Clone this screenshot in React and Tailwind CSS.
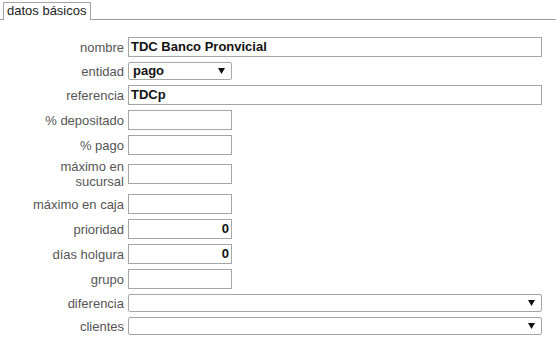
import React from "react";

const font = { fontFamily: '"Liberation Sans", Arial, sans-serif' };

function Arrow() {
  return (
    <svg width="7" height="6" viewBox="0 0 7 6" className="block">
      <polygon points="0,0 7,0 3.5,6" fill="#111" />
    </svg>
  );
}

function Label({ children }) {
  return (
    <div className="w-[124px] shrink-0 text-right text-[13px] leading-[15px] text-[#555]">
      {children}
    </div>
  );
}

function TextBox({ wide, value, right }) {
  return (
    <div
      className={`ml-[4px] h-[20px] border border-[#a6a6a6] bg-white flex items-center px-[2px] text-[13px] font-bold text-[#111] ${
        wide ? "w-[414px]" : "w-[104px]"
      } ${right ? "justify-end" : ""}`}
    >
      {value}
    </div>
  );
}

function Select({ wide, value }) {
  return (
    <div
      className={`ml-[4px] h-[18px] border border-[#a6a6a6] rounded-[2px] bg-white flex items-center justify-between pl-[4px] pr-[6px] text-[13px] font-bold text-[#111] ${
        wide ? "w-[414px]" : "w-[104px]"
      }`}
    >
      <span>{value}</span>
      <Arrow />
    </div>
  );
}

function Row({ label, children, h = 20, className = "" }) {
  return (
    <div className={`flex items-center ${className}`} style={{ height: h }}>
      <Label>{label}</Label>
      {children}
    </div>
  );
}

export default function App() {
  return (
    <div className="w-[556px] h-[348px] bg-white overflow-hidden" style={font}>
      <div className="flex pt-[2px]">
        <div className="w-[3px] h-[18px] border-b border-[#9a9a9a]" />
        <div className="h-[18px] border-l border-t border-r border-[#a6a6a6] px-[3px] text-[13px] leading-[16px] text-[#222] bg-white">
          datos básicos
        </div>
        <div className="flex-1 h-[18px] border-b border-[#9a9a9a]" />
      </div>
      <div className="flex flex-col gap-[5px] pt-[17px]">
        <Row label="nombre">
          <TextBox wide value="TDC Banco Pronvicial" />
        </Row>
        <Row label="entidad" h={18}>
          <Select value="pago" />
        </Row>
        <Row label="referencia">
          <TextBox wide value="TDCp" />
        </Row>
        <Row label="% depositado">
          <TextBox />
        </Row>
        <Row label="% pago">
          <TextBox />
        </Row>
        <Row
          label={
            <>
              máximo en
              <br />
              sucursal
            </>
          }
          className="mt-[4px]"
        >
          <TextBox />
        </Row>
        <Row label="máximo en caja" className="mt-[5px]">
          <TextBox />
        </Row>
        <Row label="prioridad">
          <TextBox value="0" right />
        </Row>
        <Row label="días holgura">
          <TextBox value="0" right />
        </Row>
        <Row label="grupo">
          <TextBox />
        </Row>
        <Row label="diferencia" h={18}>
          <Select wide value="" />
        </Row>
        <Row label="clientes" h={18}>
          <Select wide value="" />
        </Row>
      </div>
    </div>
  );
}
